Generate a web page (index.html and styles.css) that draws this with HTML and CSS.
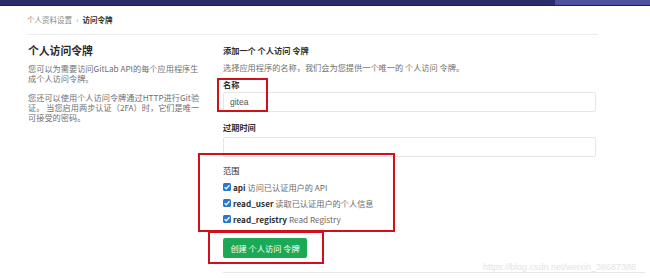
FILE: index.html
```html
<!DOCTYPE html>
<html lang="zh-CN">
<head>
<meta charset="utf-8">
<title>个人访问令牌</title>
<link rel="stylesheet" href="styles.css">
</head>
<body>
<div class="topbar"><div class="topbar-main"></div><div class="topbar-side"></div></div>
<div class="page">
  <div class="breadcrumb"><span class="crumb">个人资料设置</span><span class="sep">›</span><span class="crumb-current">访问令牌</span></div>
  <div class="row">
    <div class="left">
      <h2 class="title">个人访问令牌</h2>
      <p class="para">您可以为需要访问GitLab API的每个应用程序生<br>成个人访问令牌。</p>
      <p class="para para-2">您还可以使用个人访问令牌通过HTTP进行Git验<br>证。 当您启用两步认证（2FA）时，它们是唯一<br>可接受的密码。</p>
    </div>
    <div class="right">
      <div class="form-title">添加一个 个人访问 令牌</div>
      <div class="form-desc">选择应用程序的名称，我们会为您提供一个唯一的 个人访问 令牌。</div>
      <div class="label label-name">名称</div>
      <div class="input"><span class="input-value">gitea</span></div>
      <div class="label label-exp">过期时间</div>
      <div class="input"></div>
      <div class="label label-scope">范围</div>
      <div class="scope"><span class="check"><svg viewBox="0 0 8 8" width="8" height="8"><path d="M1.6 4.2 L3.3 5.8 L6.5 2.2" fill="none" stroke="#fff" stroke-width="1.3"/></svg></span><b>api</b> 访问已认证用户的 API</div>
      <div class="scope"><span class="check"><svg viewBox="0 0 8 8" width="8" height="8"><path d="M1.6 4.2 L3.3 5.8 L6.5 2.2" fill="none" stroke="#fff" stroke-width="1.3"/></svg></span><b>read_user</b> 读取已认证用户的个人信息</div>
      <div class="scope"><span class="check"><svg viewBox="0 0 8 8" width="8" height="8"><path d="M1.6 4.2 L3.3 5.8 L6.5 2.2" fill="none" stroke="#fff" stroke-width="1.3"/></svg></span><b>read_registry</b> Read Registry</div>
      <button class="btn">创建 个人访问 令牌</button>
      <div class="bottom-line"></div>
    </div>
  </div>
</div>
<div class="mark mark-name"></div>
<div class="mark mark-scope"></div>
<div class="mark mark-btn"></div>
<div class="watermark">https://blog.csdn.net/weixin_38687388</div>
</body>
</html>
```
FILE: styles.css
```css
html, body {
  margin: 0;
  padding: 0;
  background: #ffffff;
}
body {
  position: relative;
  width: 650px;
  height: 278px;
  overflow: hidden;
  font-family: "Noto Sans CJK SC", "Liberation Sans", sans-serif;
  font-size: 8.2px;
  color: #2e2e2e;
}
.topbar {
  display: flex;
  height: 5px;
  border-bottom: 1px solid #20204f;
}
.topbar-main {
  flex: 1;
  background: #2c2c6c;
}
.topbar-side {
  width: 95px;
  background: #5050a0;
}
.page {
  margin-left: 27px;
  width: 571px;
}
.breadcrumb {
  height: 28px;
  display: flex;
  align-items: center;
  border-bottom: 1px solid #ececec;
  font-size: 7.5px;
  line-height: 10px;
}
.crumb {
  color: #8a8a8a;
}
.sep {
  color: #999;
  margin: 0 4px;
  font-size: 8px;
}
.crumb-current {
  font-weight: bold;
  color: #2e2e2e;
}
.row {
  display: grid;
  grid-template-columns: 196px 373px;
}
.left {
  padding-left: 1px;
}
.title {
  margin: 8px 0 0;
  font-size: 10.8px;
  line-height: 14px;
  font-weight: bold;
  color: #2a2a2a;
}
.para {
  margin: 6px 0 0;
  line-height: 10px;
  color: #707070;
}
.para-2 {
  margin-top: 9px;
}
.form-title {
  margin-top: 10px;
  line-height: 10px;
  font-weight: bold;
}
.form-desc {
  margin-top: 7px;
  line-height: 10px;
  color: #707070;
}
.label {
  line-height: 10px;
  font-weight: bold;
}
.label-name {
  margin-top: 7px;
  margin-bottom: 3px;
}
.label-exp {
  margin-top: 10px;
  margin-bottom: 5px;
}
.label-scope {
  margin-top: 8px;
  font-weight: normal;
  color: #2e2e2e;
}
.input {
  box-sizing: border-box;
  height: 20px;
  border: 1px solid #e6e6e6;
  border-radius: 2px;
  display: flex;
  align-items: center;
  padding-left: 6px;
}
.input-value {
  color: #555;
  font-family: "Liberation Sans", sans-serif;
  font-size: 8.5px;
}
.scope {
  display: flex;
  align-items: center;
  height: 12px;
  margin-top: 4px;
  color: #6a6a6a;
  white-space: pre;
}
.label-scope + .scope {
  margin-top: 6px;
}
.scope b {
  color: #2e2e2e;
  font-weight: bold;
}
.check {
  width: 8px;
  height: 8px;
  border-radius: 1.5px;
  background: #2478d4;
  margin-right: 2px;
  display: flex;
}
.btn {
  display: block;
  margin-top: 13px;
  height: 20px;
  padding: 0 6px;
  width: 84px;
  border: none;
  border-radius: 2px;
  background: #1aaa55;
  color: #ffffff;
  font-family: "Noto Sans CJK SC", "Liberation Sans", sans-serif;
  font-size: 8.2px;
  white-space: pre;
}
.bottom-line {
  margin-top: 14px;
  width: 422px;
  border-top: 1px solid #e8e8e8;
}
.mark {
  position: absolute;
  box-sizing: border-box;
  border: 2px solid #d0101a;
}
.mark-name {
  left: 217px;
  top: 78px;
  width: 51px;
  height: 34px;
}
.mark-scope {
  left: 198px;
  top: 153px;
  width: 197px;
  height: 79px;
}
.mark-btn {
  left: 208px;
  top: 231px;
  width: 116px;
  height: 33px;
}
.watermark {
  position: absolute;
  left: 483px;
  top: 261px;
  font-family: "Liberation Sans", sans-serif;
  font-size: 9px;
  line-height: 12px;
  color: #e4e4e4;
  white-space: nowrap;
}
```
